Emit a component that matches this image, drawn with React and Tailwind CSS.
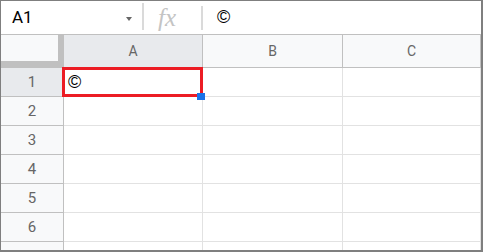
import React from "react";

const rows = [1, 2, 3, 4, 5, 6, 7];
const cols = ["A", "B", "C"];

export default function App() {
  return (
    <div className="relative w-[483px] h-[252px] overflow-hidden bg-white border-t border-l border-r-2 border-b-2 border-[#7f7f7f] font-['Roboto',sans-serif]">
      {/* formula bar */}
      <div className="h-[34px] flex border-b border-[#c0c0c0]">
        <div className="w-[141px] flex items-center justify-between pl-[11px] pr-[10px]">
          <span className="text-[17px] text-black">A1</span>
          <span className="w-0 h-0 mt-[2px] border-l-[3px] border-r-[3px] border-t-[4px] border-l-transparent border-r-transparent border-t-[#666]" />
        </div>
        <div className="w-[2px] h-[27px] mt-[2px] bg-[#dadada]" />
        <div className="w-[57px] flex items-center pl-[14px]">
          <span className="italic text-[25px] leading-none text-[#c4c4c4] font-['Liberation_Serif',serif]">fx</span>
        </div>
        <div className="w-[2px] h-[24px] mt-[5px] bg-[#dadada]" />
        <div className="flex items-center pl-[14px] text-[18px] text-black font-['Liberation_Sans',sans-serif]">©</div>
      </div>

      {/* grid */}
      <div className="grid grid-cols-[63px_139px_140px_138px] grid-rows-[33px_repeat(7,29px)]">
        <div className="bg-[#f8f9fa] border-r-[6px] border-b-[7px] border-[#c0c0c0]" />
        {cols.map((c) => (
          <div
            key={c}
            className={`flex items-center justify-center text-[14px] text-[#666] border-r border-b border-[#c0c0c0] ${c === "A" ? "bg-[#e8eaed]" : "bg-[#f8f9fa]"}`}
          >
            {c}
          </div>
        ))}
        {rows.map((r) => (
          <React.Fragment key={r}>
            <div
              className={`flex items-center justify-center text-[15px] text-[#666] border-r border-b border-[#c0c0c0] ${r === 1 ? "bg-[#e8eaed]" : "bg-[#f8f9fa]"}`}
            >
              {r}
            </div>
            {cols.map((c) => (
              <div
                key={c}
                className="flex items-center pl-[4px] pt-[1px] text-[18px] text-black border-r border-b border-[#e2e2e2] font-['Liberation_Sans',sans-serif]"
              >
                {r === 1 && c === "A" ? "©" : ""}
              </div>
            ))}
          </React.Fragment>
        ))}
      </div>

      {/* selection */}
      <div className="absolute left-[61px] top-[66px] w-[141px] h-[30px] border-[3px] border-[#ec1c24]" />
      <div className="absolute left-[196px] top-[92px] w-[8px] h-[7px] bg-[#1a73e8]" />
    </div>
  );
}
